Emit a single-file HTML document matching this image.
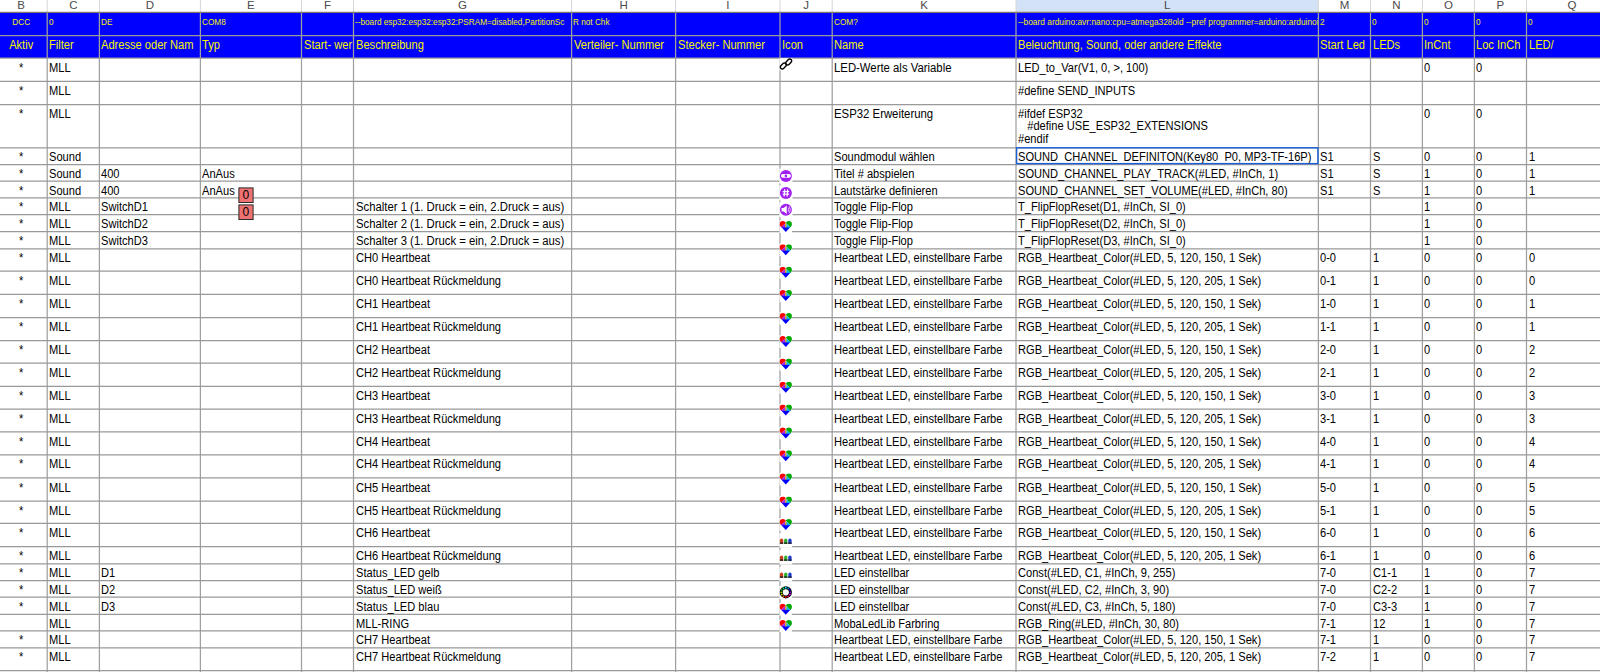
<!DOCTYPE html>
<html><head><meta charset="utf-8">
<style>
html,body{margin:0;padding:0}
body{width:1600px;height:672px;overflow:hidden;background:#fff;position:relative;font-family:"Liberation Sans",sans-serif}
.t{position:absolute;white-space:pre;overflow:hidden;line-height:14px;height:14px}
.h{position:absolute;top:-1.5px;height:13px;line-height:13px;text-align:center;font-size:11.5px;color:#4a4a4a}
svg{position:absolute;left:0;top:0}
</style></head><body>
<div style="position:absolute;left:1016px;top:0;width:302.4px;height:12px;background:#d3e2f7"></div>
<div style="position:absolute;left:0;top:12.6px;width:1600px;height:45.4px;background:#0000ff"></div>
<div class="h" style="left:-5.20px;width:52.40px">B</div><div class="h" style="left:47.20px;width:52.20px">C</div><div class="h" style="left:99.40px;width:101.00px">D</div><div class="h" style="left:200.40px;width:101.10px">E</div><div class="h" style="left:301.50px;width:52.00px">F</div><div class="h" style="left:353.50px;width:218.10px">G</div><div class="h" style="left:571.60px;width:104.00px">H</div><div class="h" style="left:675.60px;width:104.40px">I</div><div class="h" style="left:780.00px;width:52.20px">J</div><div class="h" style="left:832.20px;width:183.80px">K</div><div class="h" style="left:1016.00px;width:302.40px">L</div><div class="h" style="left:1318.40px;width:52.10px">M</div><div class="h" style="left:1370.50px;width:51.90px">N</div><div class="h" style="left:1422.40px;width:52.00px">O</div><div class="h" style="left:1474.40px;width:52.10px">P</div><div class="h" style="left:1526.50px;width:91.00px">Q</div>
<svg width="1600" height="672" viewBox="0 0 1600 672"><line x1="47.2" y1="0" x2="47.2" y2="12" stroke="#d6d6d6" stroke-width="1"/><line x1="99.4" y1="0" x2="99.4" y2="12" stroke="#d6d6d6" stroke-width="1"/><line x1="200.4" y1="0" x2="200.4" y2="12" stroke="#d6d6d6" stroke-width="1"/><line x1="301.5" y1="0" x2="301.5" y2="12" stroke="#d6d6d6" stroke-width="1"/><line x1="353.5" y1="0" x2="353.5" y2="12" stroke="#d6d6d6" stroke-width="1"/><line x1="571.6" y1="0" x2="571.6" y2="12" stroke="#d6d6d6" stroke-width="1"/><line x1="675.6" y1="0" x2="675.6" y2="12" stroke="#d6d6d6" stroke-width="1"/><line x1="780" y1="0" x2="780" y2="12" stroke="#d6d6d6" stroke-width="1"/><line x1="832.2" y1="0" x2="832.2" y2="12" stroke="#d6d6d6" stroke-width="1"/><line x1="1016" y1="0" x2="1016" y2="12" stroke="#d6d6d6" stroke-width="1"/><line x1="1318.4" y1="0" x2="1318.4" y2="12" stroke="#d6d6d6" stroke-width="1"/><line x1="1370.5" y1="0" x2="1370.5" y2="12" stroke="#d6d6d6" stroke-width="1"/><line x1="1422.4" y1="0" x2="1422.4" y2="12" stroke="#d6d6d6" stroke-width="1"/><line x1="1474.4" y1="0" x2="1474.4" y2="12" stroke="#d6d6d6" stroke-width="1"/><line x1="1526.5" y1="0" x2="1526.5" y2="12" stroke="#d6d6d6" stroke-width="1"/><line x1="47.2" y1="12.5" x2="47.2" y2="672" stroke="#a0a0a0" stroke-width="1.25"/><line x1="99.4" y1="12.5" x2="99.4" y2="672" stroke="#a0a0a0" stroke-width="1.25"/><line x1="200.4" y1="12.5" x2="200.4" y2="672" stroke="#a0a0a0" stroke-width="1.25"/><line x1="301.5" y1="12.5" x2="301.5" y2="672" stroke="#a0a0a0" stroke-width="1.25"/><line x1="353.5" y1="12.5" x2="353.5" y2="672" stroke="#a0a0a0" stroke-width="1.25"/><line x1="571.6" y1="12.5" x2="571.6" y2="672" stroke="#a0a0a0" stroke-width="1.25"/><line x1="675.6" y1="12.5" x2="675.6" y2="672" stroke="#a0a0a0" stroke-width="1.25"/><line x1="780" y1="12.5" x2="780" y2="672" stroke="#a0a0a0" stroke-width="1.25"/><line x1="832.2" y1="12.5" x2="832.2" y2="672" stroke="#a0a0a0" stroke-width="1.25"/><line x1="1016" y1="12.5" x2="1016" y2="672" stroke="#a0a0a0" stroke-width="1.25"/><line x1="1318.4" y1="12.5" x2="1318.4" y2="672" stroke="#a0a0a0" stroke-width="1.25"/><line x1="1370.5" y1="12.5" x2="1370.5" y2="672" stroke="#a0a0a0" stroke-width="1.25"/><line x1="1422.4" y1="12.5" x2="1422.4" y2="672" stroke="#a0a0a0" stroke-width="1.25"/><line x1="1474.4" y1="12.5" x2="1474.4" y2="672" stroke="#a0a0a0" stroke-width="1.25"/><line x1="1526.5" y1="12.5" x2="1526.5" y2="672" stroke="#a0a0a0" stroke-width="1.25"/><line x1="0" y1="35.5" x2="1600" y2="35.5" stroke="#999999" stroke-width="1.25"/><line x1="0" y1="58.2" x2="1600" y2="58.2" stroke="#999999" stroke-width="1.25"/><line x1="0" y1="81.3" x2="1600" y2="81.3" stroke="#999999" stroke-width="1.25"/><line x1="0" y1="104.5" x2="1600" y2="104.5" stroke="#999999" stroke-width="1.25"/><line x1="0" y1="147.75" x2="1600" y2="147.75" stroke="#999999" stroke-width="1.25"/><line x1="0" y1="164.6" x2="1600" y2="164.6" stroke="#999999" stroke-width="1.25"/><line x1="0" y1="181" x2="1600" y2="181" stroke="#999999" stroke-width="1.25"/><line x1="0" y1="197.75" x2="1600" y2="197.75" stroke="#999999" stroke-width="1.25"/><line x1="0" y1="214.5" x2="1600" y2="214.5" stroke="#999999" stroke-width="1.25"/><line x1="0" y1="231.5" x2="1600" y2="231.5" stroke="#999999" stroke-width="1.25"/><line x1="0" y1="248.75" x2="1600" y2="248.75" stroke="#999999" stroke-width="1.25"/><line x1="0" y1="271.2" x2="1600" y2="271.2" stroke="#999999" stroke-width="1.25"/><line x1="0" y1="294.4" x2="1600" y2="294.4" stroke="#999999" stroke-width="1.25"/><line x1="0" y1="317.5" x2="1600" y2="317.5" stroke="#999999" stroke-width="1.25"/><line x1="0" y1="340.5" x2="1600" y2="340.5" stroke="#999999" stroke-width="1.25"/><line x1="0" y1="363.1" x2="1600" y2="363.1" stroke="#999999" stroke-width="1.25"/><line x1="0" y1="386.25" x2="1600" y2="386.25" stroke="#999999" stroke-width="1.25"/><line x1="0" y1="409" x2="1600" y2="409" stroke="#999999" stroke-width="1.25"/><line x1="0" y1="431.9" x2="1600" y2="431.9" stroke="#999999" stroke-width="1.25"/><line x1="0" y1="454.75" x2="1600" y2="454.75" stroke="#999999" stroke-width="1.25"/><line x1="0" y1="477.9" x2="1600" y2="477.9" stroke="#999999" stroke-width="1.25"/><line x1="0" y1="501" x2="1600" y2="501" stroke="#999999" stroke-width="1.25"/><line x1="0" y1="523.4" x2="1600" y2="523.4" stroke="#999999" stroke-width="1.25"/><line x1="0" y1="546.5" x2="1600" y2="546.5" stroke="#999999" stroke-width="1.25"/><line x1="0" y1="563.75" x2="1600" y2="563.75" stroke="#999999" stroke-width="1.25"/><line x1="0" y1="580.6" x2="1600" y2="580.6" stroke="#999999" stroke-width="1.25"/><line x1="0" y1="597.1" x2="1600" y2="597.1" stroke="#999999" stroke-width="1.25"/><line x1="0" y1="614.25" x2="1600" y2="614.25" stroke="#999999" stroke-width="1.25"/><line x1="0" y1="630.9" x2="1600" y2="630.9" stroke="#999999" stroke-width="1.25"/><line x1="0" y1="647.75" x2="1600" y2="647.75" stroke="#999999" stroke-width="1.25"/><line x1="0" y1="670.5" x2="1600" y2="670.5" stroke="#999999" stroke-width="1.25"/><line x1="0" y1="12.4" x2="1600" y2="12.4" stroke="#7f7a69" stroke-width="1.2"/></svg>
<div class="t" style="left:-5.20px;top:60.84px;width:52.40px;text-align:center;font-size:12px;color:#000;transform:scaleX(0.925)">*</div><div class="t" style="left:49.20px;top:60.84px;width:53.73px;font-size:12px;color:#000;transform:scaleX(0.925);transform-origin:0 0">MLL</div><div class="t" style="left:834.20px;top:60.84px;width:191.78px;font-size:12px;color:#000;transform:scaleX(0.94535);transform-origin:0 0">LED-Werte als Variable</div><div class="t" style="left:1018.00px;top:60.84px;width:324.22px;font-size:12px;color:#000;transform:scaleX(0.925);transform-origin:0 0">LED_to_Var(V1, 0, &gt;, 100)</div><div class="t" style="left:1424.40px;top:60.84px;width:53.51px;font-size:12px;color:#000;transform:scaleX(0.925);transform-origin:0 0">0</div><div class="t" style="left:1476.40px;top:60.84px;width:53.62px;font-size:12px;color:#000;transform:scaleX(0.925);transform-origin:0 0">0</div><div class="t" style="left:-5.20px;top:83.84px;width:52.40px;text-align:center;font-size:12px;color:#000;transform:scaleX(0.925)">*</div><div class="t" style="left:49.20px;top:83.84px;width:53.73px;font-size:12px;color:#000;transform:scaleX(0.925);transform-origin:0 0">MLL</div><div class="t" style="left:1018.00px;top:83.84px;width:324.22px;font-size:12px;color:#000;transform:scaleX(0.925);transform-origin:0 0">#define SEND_INPUTS</div><div class="t" style="left:-5.20px;top:106.84px;width:52.40px;text-align:center;font-size:12px;color:#000;transform:scaleX(0.925)">*</div><div class="t" style="left:49.20px;top:106.84px;width:53.73px;font-size:12px;color:#000;transform:scaleX(0.925);transform-origin:0 0">MLL</div><div class="t" style="left:834.20px;top:106.84px;width:191.41px;font-size:12px;color:#000;transform:scaleX(0.9472);transform-origin:0 0">ESP32 Erweiterung</div><div class="t" style="left:1424.40px;top:106.84px;width:53.51px;font-size:12px;color:#000;transform:scaleX(0.925);transform-origin:0 0">0</div><div class="t" style="left:1476.40px;top:106.84px;width:53.62px;font-size:12px;color:#000;transform:scaleX(0.925);transform-origin:0 0">0</div><div class="t" style="left:-5.20px;top:149.84px;width:52.40px;text-align:center;font-size:12px;color:#000;transform:scaleX(0.925)">*</div><div class="t" style="left:49.20px;top:149.84px;width:53.73px;font-size:12px;color:#000;transform:scaleX(0.925);transform-origin:0 0">Sound</div><div class="t" style="left:834.20px;top:149.84px;width:196.00px;font-size:12px;color:#000;transform:scaleX(0.925);transform-origin:0 0">Soundmodul wählen</div><div class="t" style="left:1018.00px;top:149.84px;width:324.22px;font-size:12px;color:#000;transform:scaleX(0.925);transform-origin:0 0">SOUND_CHANNEL_DEFINITON(Key80_P0, MP3-TF-16P)</div><div class="t" style="left:1320.40px;top:149.84px;width:53.62px;font-size:12px;color:#000;transform:scaleX(0.925);transform-origin:0 0">S1</div><div class="t" style="left:1372.50px;top:149.84px;width:53.41px;font-size:12px;color:#000;transform:scaleX(0.925);transform-origin:0 0">S</div><div class="t" style="left:1424.40px;top:149.84px;width:53.51px;font-size:12px;color:#000;transform:scaleX(0.925);transform-origin:0 0">0</div><div class="t" style="left:1476.40px;top:149.84px;width:53.62px;font-size:12px;color:#000;transform:scaleX(0.925);transform-origin:0 0">0</div><div class="t" style="left:1528.50px;top:149.84px;width:95.68px;font-size:12px;color:#000;transform:scaleX(0.925);transform-origin:0 0">1</div><div class="t" style="left:-5.20px;top:166.84px;width:52.40px;text-align:center;font-size:12px;color:#000;transform:scaleX(0.925)">*</div><div class="t" style="left:49.20px;top:166.84px;width:53.73px;font-size:12px;color:#000;transform:scaleX(0.925);transform-origin:0 0">Sound</div><div class="t" style="left:101.40px;top:166.84px;width:106.49px;font-size:12px;color:#000;transform:scaleX(0.925);transform-origin:0 0">400</div><div class="t" style="left:202.40px;top:166.84px;width:106.59px;font-size:12px;color:#000;transform:scaleX(0.925);transform-origin:0 0">AnAus</div><div class="t" style="left:834.20px;top:166.84px;width:196.00px;font-size:12px;color:#000;transform:scaleX(0.925);transform-origin:0 0">Titel # abspielen</div><div class="t" style="left:1018.00px;top:166.84px;width:324.22px;font-size:12px;color:#000;transform:scaleX(0.925);transform-origin:0 0">SOUND_CHANNEL_PLAY_TRACK(#LED, #InCh, 1)</div><div class="t" style="left:1320.40px;top:166.84px;width:53.62px;font-size:12px;color:#000;transform:scaleX(0.925);transform-origin:0 0">S1</div><div class="t" style="left:1372.50px;top:166.84px;width:53.41px;font-size:12px;color:#000;transform:scaleX(0.925);transform-origin:0 0">S</div><div class="t" style="left:1424.40px;top:166.84px;width:53.51px;font-size:12px;color:#000;transform:scaleX(0.925);transform-origin:0 0">1</div><div class="t" style="left:1476.40px;top:166.84px;width:53.62px;font-size:12px;color:#000;transform:scaleX(0.925);transform-origin:0 0">0</div><div class="t" style="left:1528.50px;top:166.84px;width:95.68px;font-size:12px;color:#000;transform:scaleX(0.925);transform-origin:0 0">1</div><div class="t" style="left:-5.20px;top:183.84px;width:52.40px;text-align:center;font-size:12px;color:#000;transform:scaleX(0.925)">*</div><div class="t" style="left:49.20px;top:183.84px;width:53.73px;font-size:12px;color:#000;transform:scaleX(0.925);transform-origin:0 0">Sound</div><div class="t" style="left:101.40px;top:183.84px;width:106.49px;font-size:12px;color:#000;transform:scaleX(0.925);transform-origin:0 0">400</div><div class="t" style="left:202.40px;top:183.84px;width:106.59px;font-size:12px;color:#000;transform:scaleX(0.925);transform-origin:0 0">AnAus</div><div class="t" style="left:834.20px;top:183.84px;width:196.00px;font-size:12px;color:#000;transform:scaleX(0.925);transform-origin:0 0">Lautstärke definieren</div><div class="t" style="left:1018.00px;top:183.84px;width:324.22px;font-size:12px;color:#000;transform:scaleX(0.925);transform-origin:0 0">SOUND_CHANNEL_SET_VOLUME(#LED, #InCh, 80)</div><div class="t" style="left:1320.40px;top:183.84px;width:53.62px;font-size:12px;color:#000;transform:scaleX(0.925);transform-origin:0 0">S1</div><div class="t" style="left:1372.50px;top:183.84px;width:53.41px;font-size:12px;color:#000;transform:scaleX(0.925);transform-origin:0 0">S</div><div class="t" style="left:1424.40px;top:183.84px;width:53.51px;font-size:12px;color:#000;transform:scaleX(0.925);transform-origin:0 0">1</div><div class="t" style="left:1476.40px;top:183.84px;width:53.62px;font-size:12px;color:#000;transform:scaleX(0.925);transform-origin:0 0">0</div><div class="t" style="left:1528.50px;top:183.84px;width:95.68px;font-size:12px;color:#000;transform:scaleX(0.925);transform-origin:0 0">1</div><div class="t" style="left:-5.20px;top:199.84px;width:52.40px;text-align:center;font-size:12px;color:#000;transform:scaleX(0.925)">*</div><div class="t" style="left:49.20px;top:199.84px;width:53.73px;font-size:12px;color:#000;transform:scaleX(0.925);transform-origin:0 0">MLL</div><div class="t" style="left:101.40px;top:199.84px;width:106.49px;font-size:12px;color:#000;transform:scaleX(0.925);transform-origin:0 0">SwitchD1</div><div class="t" style="left:355.50px;top:199.84px;width:228.51px;font-size:12px;color:#000;transform:scaleX(0.9435000000000001);transform-origin:0 0">Schalter 1 (1. Druck = ein, 2.Druck = aus)</div><div class="t" style="left:834.20px;top:199.84px;width:196.00px;font-size:12px;color:#000;transform:scaleX(0.925);transform-origin:0 0">Toggle Flip-Flop</div><div class="t" style="left:1018.00px;top:199.84px;width:324.22px;font-size:12px;color:#000;transform:scaleX(0.925);transform-origin:0 0">T_FlipFlopReset(D1, #InCh, SI_0)</div><div class="t" style="left:1424.40px;top:199.84px;width:53.51px;font-size:12px;color:#000;transform:scaleX(0.925);transform-origin:0 0">1</div><div class="t" style="left:1476.40px;top:199.84px;width:53.62px;font-size:12px;color:#000;transform:scaleX(0.925);transform-origin:0 0">0</div><div class="t" style="left:-5.20px;top:216.84px;width:52.40px;text-align:center;font-size:12px;color:#000;transform:scaleX(0.925)">*</div><div class="t" style="left:49.20px;top:216.84px;width:53.73px;font-size:12px;color:#000;transform:scaleX(0.925);transform-origin:0 0">MLL</div><div class="t" style="left:101.40px;top:216.84px;width:106.49px;font-size:12px;color:#000;transform:scaleX(0.925);transform-origin:0 0">SwitchD2</div><div class="t" style="left:355.50px;top:216.84px;width:228.51px;font-size:12px;color:#000;transform:scaleX(0.9435000000000001);transform-origin:0 0">Schalter 2 (1. Druck = ein, 2.Druck = aus)</div><div class="t" style="left:834.20px;top:216.84px;width:196.00px;font-size:12px;color:#000;transform:scaleX(0.925);transform-origin:0 0">Toggle Flip-Flop</div><div class="t" style="left:1018.00px;top:216.84px;width:324.22px;font-size:12px;color:#000;transform:scaleX(0.925);transform-origin:0 0">T_FlipFlopReset(D2, #InCh, SI_0)</div><div class="t" style="left:1424.40px;top:216.84px;width:53.51px;font-size:12px;color:#000;transform:scaleX(0.925);transform-origin:0 0">1</div><div class="t" style="left:1476.40px;top:216.84px;width:53.62px;font-size:12px;color:#000;transform:scaleX(0.925);transform-origin:0 0">0</div><div class="t" style="left:-5.20px;top:233.84px;width:52.40px;text-align:center;font-size:12px;color:#000;transform:scaleX(0.925)">*</div><div class="t" style="left:49.20px;top:233.84px;width:53.73px;font-size:12px;color:#000;transform:scaleX(0.925);transform-origin:0 0">MLL</div><div class="t" style="left:101.40px;top:233.84px;width:106.49px;font-size:12px;color:#000;transform:scaleX(0.925);transform-origin:0 0">SwitchD3</div><div class="t" style="left:355.50px;top:233.84px;width:228.51px;font-size:12px;color:#000;transform:scaleX(0.9435000000000001);transform-origin:0 0">Schalter 3 (1. Druck = ein, 2.Druck = aus)</div><div class="t" style="left:834.20px;top:233.84px;width:196.00px;font-size:12px;color:#000;transform:scaleX(0.925);transform-origin:0 0">Toggle Flip-Flop</div><div class="t" style="left:1018.00px;top:233.84px;width:324.22px;font-size:12px;color:#000;transform:scaleX(0.925);transform-origin:0 0">T_FlipFlopReset(D3, #InCh, SI_0)</div><div class="t" style="left:1424.40px;top:233.84px;width:53.51px;font-size:12px;color:#000;transform:scaleX(0.925);transform-origin:0 0">1</div><div class="t" style="left:1476.40px;top:233.84px;width:53.62px;font-size:12px;color:#000;transform:scaleX(0.925);transform-origin:0 0">0</div><div class="t" style="left:-5.20px;top:250.84px;width:52.40px;text-align:center;font-size:12px;color:#000;transform:scaleX(0.925)">*</div><div class="t" style="left:49.20px;top:250.84px;width:53.73px;font-size:12px;color:#000;transform:scaleX(0.925);transform-origin:0 0">MLL</div><div class="t" style="left:355.50px;top:250.84px;width:233.08px;font-size:12px;color:#000;transform:scaleX(0.925);transform-origin:0 0">CH0 Heartbeat</div><div class="t" style="left:834.20px;top:250.84px;width:196.00px;font-size:12px;color:#000;transform:scaleX(0.925);transform-origin:0 0">Heartbeat LED, einstellbare Farbe</div><div class="t" style="left:1018.00px;top:250.84px;width:324.22px;font-size:12px;color:#000;transform:scaleX(0.925);transform-origin:0 0">RGB_Heartbeat_Color(#LED, 5, 120, 150, 1 Sek)</div><div class="t" style="left:1320.40px;top:250.84px;width:53.62px;font-size:12px;color:#000;transform:scaleX(0.925);transform-origin:0 0">0-0</div><div class="t" style="left:1372.50px;top:250.84px;width:53.41px;font-size:12px;color:#000;transform:scaleX(0.925);transform-origin:0 0">1</div><div class="t" style="left:1424.40px;top:250.84px;width:53.51px;font-size:12px;color:#000;transform:scaleX(0.925);transform-origin:0 0">0</div><div class="t" style="left:1476.40px;top:250.84px;width:53.62px;font-size:12px;color:#000;transform:scaleX(0.925);transform-origin:0 0">0</div><div class="t" style="left:1528.50px;top:250.84px;width:95.68px;font-size:12px;color:#000;transform:scaleX(0.925);transform-origin:0 0">0</div><div class="t" style="left:-5.20px;top:273.84px;width:52.40px;text-align:center;font-size:12px;color:#000;transform:scaleX(0.925)">*</div><div class="t" style="left:49.20px;top:273.84px;width:53.73px;font-size:12px;color:#000;transform:scaleX(0.925);transform-origin:0 0">MLL</div><div class="t" style="left:355.50px;top:273.84px;width:233.08px;font-size:12px;color:#000;transform:scaleX(0.925);transform-origin:0 0">CH0 Heartbeat Rückmeldung</div><div class="t" style="left:834.20px;top:273.84px;width:196.00px;font-size:12px;color:#000;transform:scaleX(0.925);transform-origin:0 0">Heartbeat LED, einstellbare Farbe</div><div class="t" style="left:1018.00px;top:273.84px;width:324.22px;font-size:12px;color:#000;transform:scaleX(0.925);transform-origin:0 0">RGB_Heartbeat_Color(#LED, 5, 120, 205, 1 Sek)</div><div class="t" style="left:1320.40px;top:273.84px;width:53.62px;font-size:12px;color:#000;transform:scaleX(0.925);transform-origin:0 0">0-1</div><div class="t" style="left:1372.50px;top:273.84px;width:53.41px;font-size:12px;color:#000;transform:scaleX(0.925);transform-origin:0 0">1</div><div class="t" style="left:1424.40px;top:273.84px;width:53.51px;font-size:12px;color:#000;transform:scaleX(0.925);transform-origin:0 0">0</div><div class="t" style="left:1476.40px;top:273.84px;width:53.62px;font-size:12px;color:#000;transform:scaleX(0.925);transform-origin:0 0">0</div><div class="t" style="left:1528.50px;top:273.84px;width:95.68px;font-size:12px;color:#000;transform:scaleX(0.925);transform-origin:0 0">0</div><div class="t" style="left:-5.20px;top:296.84px;width:52.40px;text-align:center;font-size:12px;color:#000;transform:scaleX(0.925)">*</div><div class="t" style="left:49.20px;top:296.84px;width:53.73px;font-size:12px;color:#000;transform:scaleX(0.925);transform-origin:0 0">MLL</div><div class="t" style="left:355.50px;top:296.84px;width:233.08px;font-size:12px;color:#000;transform:scaleX(0.925);transform-origin:0 0">CH1 Heartbeat</div><div class="t" style="left:834.20px;top:296.84px;width:196.00px;font-size:12px;color:#000;transform:scaleX(0.925);transform-origin:0 0">Heartbeat LED, einstellbare Farbe</div><div class="t" style="left:1018.00px;top:296.84px;width:324.22px;font-size:12px;color:#000;transform:scaleX(0.925);transform-origin:0 0">RGB_Heartbeat_Color(#LED, 5, 120, 150, 1 Sek)</div><div class="t" style="left:1320.40px;top:296.84px;width:53.62px;font-size:12px;color:#000;transform:scaleX(0.925);transform-origin:0 0">1-0</div><div class="t" style="left:1372.50px;top:296.84px;width:53.41px;font-size:12px;color:#000;transform:scaleX(0.925);transform-origin:0 0">1</div><div class="t" style="left:1424.40px;top:296.84px;width:53.51px;font-size:12px;color:#000;transform:scaleX(0.925);transform-origin:0 0">0</div><div class="t" style="left:1476.40px;top:296.84px;width:53.62px;font-size:12px;color:#000;transform:scaleX(0.925);transform-origin:0 0">0</div><div class="t" style="left:1528.50px;top:296.84px;width:95.68px;font-size:12px;color:#000;transform:scaleX(0.925);transform-origin:0 0">1</div><div class="t" style="left:-5.20px;top:319.84px;width:52.40px;text-align:center;font-size:12px;color:#000;transform:scaleX(0.925)">*</div><div class="t" style="left:49.20px;top:319.84px;width:53.73px;font-size:12px;color:#000;transform:scaleX(0.925);transform-origin:0 0">MLL</div><div class="t" style="left:355.50px;top:319.84px;width:233.08px;font-size:12px;color:#000;transform:scaleX(0.925);transform-origin:0 0">CH1 Heartbeat Rückmeldung</div><div class="t" style="left:834.20px;top:319.84px;width:196.00px;font-size:12px;color:#000;transform:scaleX(0.925);transform-origin:0 0">Heartbeat LED, einstellbare Farbe</div><div class="t" style="left:1018.00px;top:319.84px;width:324.22px;font-size:12px;color:#000;transform:scaleX(0.925);transform-origin:0 0">RGB_Heartbeat_Color(#LED, 5, 120, 205, 1 Sek)</div><div class="t" style="left:1320.40px;top:319.84px;width:53.62px;font-size:12px;color:#000;transform:scaleX(0.925);transform-origin:0 0">1-1</div><div class="t" style="left:1372.50px;top:319.84px;width:53.41px;font-size:12px;color:#000;transform:scaleX(0.925);transform-origin:0 0">1</div><div class="t" style="left:1424.40px;top:319.84px;width:53.51px;font-size:12px;color:#000;transform:scaleX(0.925);transform-origin:0 0">0</div><div class="t" style="left:1476.40px;top:319.84px;width:53.62px;font-size:12px;color:#000;transform:scaleX(0.925);transform-origin:0 0">0</div><div class="t" style="left:1528.50px;top:319.84px;width:95.68px;font-size:12px;color:#000;transform:scaleX(0.925);transform-origin:0 0">1</div><div class="t" style="left:-5.20px;top:342.84px;width:52.40px;text-align:center;font-size:12px;color:#000;transform:scaleX(0.925)">*</div><div class="t" style="left:49.20px;top:342.84px;width:53.73px;font-size:12px;color:#000;transform:scaleX(0.925);transform-origin:0 0">MLL</div><div class="t" style="left:355.50px;top:342.84px;width:233.08px;font-size:12px;color:#000;transform:scaleX(0.925);transform-origin:0 0">CH2 Heartbeat</div><div class="t" style="left:834.20px;top:342.84px;width:196.00px;font-size:12px;color:#000;transform:scaleX(0.925);transform-origin:0 0">Heartbeat LED, einstellbare Farbe</div><div class="t" style="left:1018.00px;top:342.84px;width:324.22px;font-size:12px;color:#000;transform:scaleX(0.925);transform-origin:0 0">RGB_Heartbeat_Color(#LED, 5, 120, 150, 1 Sek)</div><div class="t" style="left:1320.40px;top:342.84px;width:53.62px;font-size:12px;color:#000;transform:scaleX(0.925);transform-origin:0 0">2-0</div><div class="t" style="left:1372.50px;top:342.84px;width:53.41px;font-size:12px;color:#000;transform:scaleX(0.925);transform-origin:0 0">1</div><div class="t" style="left:1424.40px;top:342.84px;width:53.51px;font-size:12px;color:#000;transform:scaleX(0.925);transform-origin:0 0">0</div><div class="t" style="left:1476.40px;top:342.84px;width:53.62px;font-size:12px;color:#000;transform:scaleX(0.925);transform-origin:0 0">0</div><div class="t" style="left:1528.50px;top:342.84px;width:95.68px;font-size:12px;color:#000;transform:scaleX(0.925);transform-origin:0 0">2</div><div class="t" style="left:-5.20px;top:365.84px;width:52.40px;text-align:center;font-size:12px;color:#000;transform:scaleX(0.925)">*</div><div class="t" style="left:49.20px;top:365.84px;width:53.73px;font-size:12px;color:#000;transform:scaleX(0.925);transform-origin:0 0">MLL</div><div class="t" style="left:355.50px;top:365.84px;width:233.08px;font-size:12px;color:#000;transform:scaleX(0.925);transform-origin:0 0">CH2 Heartbeat Rückmeldung</div><div class="t" style="left:834.20px;top:365.84px;width:196.00px;font-size:12px;color:#000;transform:scaleX(0.925);transform-origin:0 0">Heartbeat LED, einstellbare Farbe</div><div class="t" style="left:1018.00px;top:365.84px;width:324.22px;font-size:12px;color:#000;transform:scaleX(0.925);transform-origin:0 0">RGB_Heartbeat_Color(#LED, 5, 120, 205, 1 Sek)</div><div class="t" style="left:1320.40px;top:365.84px;width:53.62px;font-size:12px;color:#000;transform:scaleX(0.925);transform-origin:0 0">2-1</div><div class="t" style="left:1372.50px;top:365.84px;width:53.41px;font-size:12px;color:#000;transform:scaleX(0.925);transform-origin:0 0">1</div><div class="t" style="left:1424.40px;top:365.84px;width:53.51px;font-size:12px;color:#000;transform:scaleX(0.925);transform-origin:0 0">0</div><div class="t" style="left:1476.40px;top:365.84px;width:53.62px;font-size:12px;color:#000;transform:scaleX(0.925);transform-origin:0 0">0</div><div class="t" style="left:1528.50px;top:365.84px;width:95.68px;font-size:12px;color:#000;transform:scaleX(0.925);transform-origin:0 0">2</div><div class="t" style="left:-5.20px;top:388.84px;width:52.40px;text-align:center;font-size:12px;color:#000;transform:scaleX(0.925)">*</div><div class="t" style="left:49.20px;top:388.84px;width:53.73px;font-size:12px;color:#000;transform:scaleX(0.925);transform-origin:0 0">MLL</div><div class="t" style="left:355.50px;top:388.84px;width:233.08px;font-size:12px;color:#000;transform:scaleX(0.925);transform-origin:0 0">CH3 Heartbeat</div><div class="t" style="left:834.20px;top:388.84px;width:196.00px;font-size:12px;color:#000;transform:scaleX(0.925);transform-origin:0 0">Heartbeat LED, einstellbare Farbe</div><div class="t" style="left:1018.00px;top:388.84px;width:324.22px;font-size:12px;color:#000;transform:scaleX(0.925);transform-origin:0 0">RGB_Heartbeat_Color(#LED, 5, 120, 150, 1 Sek)</div><div class="t" style="left:1320.40px;top:388.84px;width:53.62px;font-size:12px;color:#000;transform:scaleX(0.925);transform-origin:0 0">3-0</div><div class="t" style="left:1372.50px;top:388.84px;width:53.41px;font-size:12px;color:#000;transform:scaleX(0.925);transform-origin:0 0">1</div><div class="t" style="left:1424.40px;top:388.84px;width:53.51px;font-size:12px;color:#000;transform:scaleX(0.925);transform-origin:0 0">0</div><div class="t" style="left:1476.40px;top:388.84px;width:53.62px;font-size:12px;color:#000;transform:scaleX(0.925);transform-origin:0 0">0</div><div class="t" style="left:1528.50px;top:388.84px;width:95.68px;font-size:12px;color:#000;transform:scaleX(0.925);transform-origin:0 0">3</div><div class="t" style="left:-5.20px;top:411.84px;width:52.40px;text-align:center;font-size:12px;color:#000;transform:scaleX(0.925)">*</div><div class="t" style="left:49.20px;top:411.84px;width:53.73px;font-size:12px;color:#000;transform:scaleX(0.925);transform-origin:0 0">MLL</div><div class="t" style="left:355.50px;top:411.84px;width:233.08px;font-size:12px;color:#000;transform:scaleX(0.925);transform-origin:0 0">CH3 Heartbeat Rückmeldung</div><div class="t" style="left:834.20px;top:411.84px;width:196.00px;font-size:12px;color:#000;transform:scaleX(0.925);transform-origin:0 0">Heartbeat LED, einstellbare Farbe</div><div class="t" style="left:1018.00px;top:411.84px;width:324.22px;font-size:12px;color:#000;transform:scaleX(0.925);transform-origin:0 0">RGB_Heartbeat_Color(#LED, 5, 120, 205, 1 Sek)</div><div class="t" style="left:1320.40px;top:411.84px;width:53.62px;font-size:12px;color:#000;transform:scaleX(0.925);transform-origin:0 0">3-1</div><div class="t" style="left:1372.50px;top:411.84px;width:53.41px;font-size:12px;color:#000;transform:scaleX(0.925);transform-origin:0 0">1</div><div class="t" style="left:1424.40px;top:411.84px;width:53.51px;font-size:12px;color:#000;transform:scaleX(0.925);transform-origin:0 0">0</div><div class="t" style="left:1476.40px;top:411.84px;width:53.62px;font-size:12px;color:#000;transform:scaleX(0.925);transform-origin:0 0">0</div><div class="t" style="left:1528.50px;top:411.84px;width:95.68px;font-size:12px;color:#000;transform:scaleX(0.925);transform-origin:0 0">3</div><div class="t" style="left:-5.20px;top:434.84px;width:52.40px;text-align:center;font-size:12px;color:#000;transform:scaleX(0.925)">*</div><div class="t" style="left:49.20px;top:434.84px;width:53.73px;font-size:12px;color:#000;transform:scaleX(0.925);transform-origin:0 0">MLL</div><div class="t" style="left:355.50px;top:434.84px;width:233.08px;font-size:12px;color:#000;transform:scaleX(0.925);transform-origin:0 0">CH4 Heartbeat</div><div class="t" style="left:834.20px;top:434.84px;width:196.00px;font-size:12px;color:#000;transform:scaleX(0.925);transform-origin:0 0">Heartbeat LED, einstellbare Farbe</div><div class="t" style="left:1018.00px;top:434.84px;width:324.22px;font-size:12px;color:#000;transform:scaleX(0.925);transform-origin:0 0">RGB_Heartbeat_Color(#LED, 5, 120, 150, 1 Sek)</div><div class="t" style="left:1320.40px;top:434.84px;width:53.62px;font-size:12px;color:#000;transform:scaleX(0.925);transform-origin:0 0">4-0</div><div class="t" style="left:1372.50px;top:434.84px;width:53.41px;font-size:12px;color:#000;transform:scaleX(0.925);transform-origin:0 0">1</div><div class="t" style="left:1424.40px;top:434.84px;width:53.51px;font-size:12px;color:#000;transform:scaleX(0.925);transform-origin:0 0">0</div><div class="t" style="left:1476.40px;top:434.84px;width:53.62px;font-size:12px;color:#000;transform:scaleX(0.925);transform-origin:0 0">0</div><div class="t" style="left:1528.50px;top:434.84px;width:95.68px;font-size:12px;color:#000;transform:scaleX(0.925);transform-origin:0 0">4</div><div class="t" style="left:-5.20px;top:456.84px;width:52.40px;text-align:center;font-size:12px;color:#000;transform:scaleX(0.925)">*</div><div class="t" style="left:49.20px;top:456.84px;width:53.73px;font-size:12px;color:#000;transform:scaleX(0.925);transform-origin:0 0">MLL</div><div class="t" style="left:355.50px;top:456.84px;width:233.08px;font-size:12px;color:#000;transform:scaleX(0.925);transform-origin:0 0">CH4 Heartbeat Rückmeldung</div><div class="t" style="left:834.20px;top:456.84px;width:196.00px;font-size:12px;color:#000;transform:scaleX(0.925);transform-origin:0 0">Heartbeat LED, einstellbare Farbe</div><div class="t" style="left:1018.00px;top:456.84px;width:324.22px;font-size:12px;color:#000;transform:scaleX(0.925);transform-origin:0 0">RGB_Heartbeat_Color(#LED, 5, 120, 205, 1 Sek)</div><div class="t" style="left:1320.40px;top:456.84px;width:53.62px;font-size:12px;color:#000;transform:scaleX(0.925);transform-origin:0 0">4-1</div><div class="t" style="left:1372.50px;top:456.84px;width:53.41px;font-size:12px;color:#000;transform:scaleX(0.925);transform-origin:0 0">1</div><div class="t" style="left:1424.40px;top:456.84px;width:53.51px;font-size:12px;color:#000;transform:scaleX(0.925);transform-origin:0 0">0</div><div class="t" style="left:1476.40px;top:456.84px;width:53.62px;font-size:12px;color:#000;transform:scaleX(0.925);transform-origin:0 0">0</div><div class="t" style="left:1528.50px;top:456.84px;width:95.68px;font-size:12px;color:#000;transform:scaleX(0.925);transform-origin:0 0">4</div><div class="t" style="left:-5.20px;top:480.84px;width:52.40px;text-align:center;font-size:12px;color:#000;transform:scaleX(0.925)">*</div><div class="t" style="left:49.20px;top:480.84px;width:53.73px;font-size:12px;color:#000;transform:scaleX(0.925);transform-origin:0 0">MLL</div><div class="t" style="left:355.50px;top:480.84px;width:233.08px;font-size:12px;color:#000;transform:scaleX(0.925);transform-origin:0 0">CH5 Heartbeat</div><div class="t" style="left:834.20px;top:480.84px;width:196.00px;font-size:12px;color:#000;transform:scaleX(0.925);transform-origin:0 0">Heartbeat LED, einstellbare Farbe</div><div class="t" style="left:1018.00px;top:480.84px;width:324.22px;font-size:12px;color:#000;transform:scaleX(0.925);transform-origin:0 0">RGB_Heartbeat_Color(#LED, 5, 120, 150, 1 Sek)</div><div class="t" style="left:1320.40px;top:480.84px;width:53.62px;font-size:12px;color:#000;transform:scaleX(0.925);transform-origin:0 0">5-0</div><div class="t" style="left:1372.50px;top:480.84px;width:53.41px;font-size:12px;color:#000;transform:scaleX(0.925);transform-origin:0 0">1</div><div class="t" style="left:1424.40px;top:480.84px;width:53.51px;font-size:12px;color:#000;transform:scaleX(0.925);transform-origin:0 0">0</div><div class="t" style="left:1476.40px;top:480.84px;width:53.62px;font-size:12px;color:#000;transform:scaleX(0.925);transform-origin:0 0">0</div><div class="t" style="left:1528.50px;top:480.84px;width:95.68px;font-size:12px;color:#000;transform:scaleX(0.925);transform-origin:0 0">5</div><div class="t" style="left:-5.20px;top:503.84px;width:52.40px;text-align:center;font-size:12px;color:#000;transform:scaleX(0.925)">*</div><div class="t" style="left:49.20px;top:503.84px;width:53.73px;font-size:12px;color:#000;transform:scaleX(0.925);transform-origin:0 0">MLL</div><div class="t" style="left:355.50px;top:503.84px;width:233.08px;font-size:12px;color:#000;transform:scaleX(0.925);transform-origin:0 0">CH5 Heartbeat Rückmeldung</div><div class="t" style="left:834.20px;top:503.84px;width:196.00px;font-size:12px;color:#000;transform:scaleX(0.925);transform-origin:0 0">Heartbeat LED, einstellbare Farbe</div><div class="t" style="left:1018.00px;top:503.84px;width:324.22px;font-size:12px;color:#000;transform:scaleX(0.925);transform-origin:0 0">RGB_Heartbeat_Color(#LED, 5, 120, 205, 1 Sek)</div><div class="t" style="left:1320.40px;top:503.84px;width:53.62px;font-size:12px;color:#000;transform:scaleX(0.925);transform-origin:0 0">5-1</div><div class="t" style="left:1372.50px;top:503.84px;width:53.41px;font-size:12px;color:#000;transform:scaleX(0.925);transform-origin:0 0">1</div><div class="t" style="left:1424.40px;top:503.84px;width:53.51px;font-size:12px;color:#000;transform:scaleX(0.925);transform-origin:0 0">0</div><div class="t" style="left:1476.40px;top:503.84px;width:53.62px;font-size:12px;color:#000;transform:scaleX(0.925);transform-origin:0 0">0</div><div class="t" style="left:1528.50px;top:503.84px;width:95.68px;font-size:12px;color:#000;transform:scaleX(0.925);transform-origin:0 0">5</div><div class="t" style="left:-5.20px;top:525.84px;width:52.40px;text-align:center;font-size:12px;color:#000;transform:scaleX(0.925)">*</div><div class="t" style="left:49.20px;top:525.84px;width:53.73px;font-size:12px;color:#000;transform:scaleX(0.925);transform-origin:0 0">MLL</div><div class="t" style="left:355.50px;top:525.84px;width:233.08px;font-size:12px;color:#000;transform:scaleX(0.925);transform-origin:0 0">CH6 Heartbeat</div><div class="t" style="left:834.20px;top:525.84px;width:196.00px;font-size:12px;color:#000;transform:scaleX(0.925);transform-origin:0 0">Heartbeat LED, einstellbare Farbe</div><div class="t" style="left:1018.00px;top:525.84px;width:324.22px;font-size:12px;color:#000;transform:scaleX(0.925);transform-origin:0 0">RGB_Heartbeat_Color(#LED, 5, 120, 150, 1 Sek)</div><div class="t" style="left:1320.40px;top:525.84px;width:53.62px;font-size:12px;color:#000;transform:scaleX(0.925);transform-origin:0 0">6-0</div><div class="t" style="left:1372.50px;top:525.84px;width:53.41px;font-size:12px;color:#000;transform:scaleX(0.925);transform-origin:0 0">1</div><div class="t" style="left:1424.40px;top:525.84px;width:53.51px;font-size:12px;color:#000;transform:scaleX(0.925);transform-origin:0 0">0</div><div class="t" style="left:1476.40px;top:525.84px;width:53.62px;font-size:12px;color:#000;transform:scaleX(0.925);transform-origin:0 0">0</div><div class="t" style="left:1528.50px;top:525.84px;width:95.68px;font-size:12px;color:#000;transform:scaleX(0.925);transform-origin:0 0">6</div><div class="t" style="left:-5.20px;top:548.84px;width:52.40px;text-align:center;font-size:12px;color:#000;transform:scaleX(0.925)">*</div><div class="t" style="left:49.20px;top:548.84px;width:53.73px;font-size:12px;color:#000;transform:scaleX(0.925);transform-origin:0 0">MLL</div><div class="t" style="left:355.50px;top:548.84px;width:233.08px;font-size:12px;color:#000;transform:scaleX(0.925);transform-origin:0 0">CH6 Heartbeat Rückmeldung</div><div class="t" style="left:834.20px;top:548.84px;width:196.00px;font-size:12px;color:#000;transform:scaleX(0.925);transform-origin:0 0">Heartbeat LED, einstellbare Farbe</div><div class="t" style="left:1018.00px;top:548.84px;width:324.22px;font-size:12px;color:#000;transform:scaleX(0.925);transform-origin:0 0">RGB_Heartbeat_Color(#LED, 5, 120, 205, 1 Sek)</div><div class="t" style="left:1320.40px;top:548.84px;width:53.62px;font-size:12px;color:#000;transform:scaleX(0.925);transform-origin:0 0">6-1</div><div class="t" style="left:1372.50px;top:548.84px;width:53.41px;font-size:12px;color:#000;transform:scaleX(0.925);transform-origin:0 0">1</div><div class="t" style="left:1424.40px;top:548.84px;width:53.51px;font-size:12px;color:#000;transform:scaleX(0.925);transform-origin:0 0">0</div><div class="t" style="left:1476.40px;top:548.84px;width:53.62px;font-size:12px;color:#000;transform:scaleX(0.925);transform-origin:0 0">0</div><div class="t" style="left:1528.50px;top:548.84px;width:95.68px;font-size:12px;color:#000;transform:scaleX(0.925);transform-origin:0 0">6</div><div class="t" style="left:-5.20px;top:565.84px;width:52.40px;text-align:center;font-size:12px;color:#000;transform:scaleX(0.925)">*</div><div class="t" style="left:49.20px;top:565.84px;width:53.73px;font-size:12px;color:#000;transform:scaleX(0.925);transform-origin:0 0">MLL</div><div class="t" style="left:101.40px;top:565.84px;width:106.49px;font-size:12px;color:#000;transform:scaleX(0.925);transform-origin:0 0">D1</div><div class="t" style="left:355.50px;top:565.84px;width:233.08px;font-size:12px;color:#000;transform:scaleX(0.925);transform-origin:0 0">Status_LED gelb</div><div class="t" style="left:834.20px;top:565.84px;width:196.00px;font-size:12px;color:#000;transform:scaleX(0.925);transform-origin:0 0">LED einstellbar</div><div class="t" style="left:1018.00px;top:565.84px;width:324.22px;font-size:12px;color:#000;transform:scaleX(0.925);transform-origin:0 0">Const(#LED, C1, #InCh, 9, 255)</div><div class="t" style="left:1320.40px;top:565.84px;width:53.62px;font-size:12px;color:#000;transform:scaleX(0.925);transform-origin:0 0">7-0</div><div class="t" style="left:1372.50px;top:565.84px;width:53.41px;font-size:12px;color:#000;transform:scaleX(0.925);transform-origin:0 0">C1-1</div><div class="t" style="left:1424.40px;top:565.84px;width:53.51px;font-size:12px;color:#000;transform:scaleX(0.925);transform-origin:0 0">1</div><div class="t" style="left:1476.40px;top:565.84px;width:53.62px;font-size:12px;color:#000;transform:scaleX(0.925);transform-origin:0 0">0</div><div class="t" style="left:1528.50px;top:565.84px;width:95.68px;font-size:12px;color:#000;transform:scaleX(0.925);transform-origin:0 0">7</div><div class="t" style="left:-5.20px;top:582.84px;width:52.40px;text-align:center;font-size:12px;color:#000;transform:scaleX(0.925)">*</div><div class="t" style="left:49.20px;top:582.84px;width:53.73px;font-size:12px;color:#000;transform:scaleX(0.925);transform-origin:0 0">MLL</div><div class="t" style="left:101.40px;top:582.84px;width:106.49px;font-size:12px;color:#000;transform:scaleX(0.925);transform-origin:0 0">D2</div><div class="t" style="left:355.50px;top:582.84px;width:233.08px;font-size:12px;color:#000;transform:scaleX(0.925);transform-origin:0 0">Status_LED weiß</div><div class="t" style="left:834.20px;top:582.84px;width:196.00px;font-size:12px;color:#000;transform:scaleX(0.925);transform-origin:0 0">LED einstellbar</div><div class="t" style="left:1018.00px;top:582.84px;width:324.22px;font-size:12px;color:#000;transform:scaleX(0.925);transform-origin:0 0">Const(#LED, C2, #InCh, 3, 90)</div><div class="t" style="left:1320.40px;top:582.84px;width:53.62px;font-size:12px;color:#000;transform:scaleX(0.925);transform-origin:0 0">7-0</div><div class="t" style="left:1372.50px;top:582.84px;width:53.41px;font-size:12px;color:#000;transform:scaleX(0.925);transform-origin:0 0">C2-2</div><div class="t" style="left:1424.40px;top:582.84px;width:53.51px;font-size:12px;color:#000;transform:scaleX(0.925);transform-origin:0 0">1</div><div class="t" style="left:1476.40px;top:582.84px;width:53.62px;font-size:12px;color:#000;transform:scaleX(0.925);transform-origin:0 0">0</div><div class="t" style="left:1528.50px;top:582.84px;width:95.68px;font-size:12px;color:#000;transform:scaleX(0.925);transform-origin:0 0">7</div><div class="t" style="left:-5.20px;top:599.84px;width:52.40px;text-align:center;font-size:12px;color:#000;transform:scaleX(0.925)">*</div><div class="t" style="left:49.20px;top:599.84px;width:53.73px;font-size:12px;color:#000;transform:scaleX(0.925);transform-origin:0 0">MLL</div><div class="t" style="left:101.40px;top:599.84px;width:106.49px;font-size:12px;color:#000;transform:scaleX(0.925);transform-origin:0 0">D3</div><div class="t" style="left:355.50px;top:599.84px;width:233.08px;font-size:12px;color:#000;transform:scaleX(0.925);transform-origin:0 0">Status_LED blau</div><div class="t" style="left:834.20px;top:599.84px;width:196.00px;font-size:12px;color:#000;transform:scaleX(0.925);transform-origin:0 0">LED einstellbar</div><div class="t" style="left:1018.00px;top:599.84px;width:324.22px;font-size:12px;color:#000;transform:scaleX(0.925);transform-origin:0 0">Const(#LED, C3, #InCh, 5, 180)</div><div class="t" style="left:1320.40px;top:599.84px;width:53.62px;font-size:12px;color:#000;transform:scaleX(0.925);transform-origin:0 0">7-0</div><div class="t" style="left:1372.50px;top:599.84px;width:53.41px;font-size:12px;color:#000;transform:scaleX(0.925);transform-origin:0 0">C3-3</div><div class="t" style="left:1424.40px;top:599.84px;width:53.51px;font-size:12px;color:#000;transform:scaleX(0.925);transform-origin:0 0">1</div><div class="t" style="left:1476.40px;top:599.84px;width:53.62px;font-size:12px;color:#000;transform:scaleX(0.925);transform-origin:0 0">0</div><div class="t" style="left:1528.50px;top:599.84px;width:95.68px;font-size:12px;color:#000;transform:scaleX(0.925);transform-origin:0 0">7</div><div class="t" style="left:49.20px;top:616.84px;width:53.73px;font-size:12px;color:#000;transform:scaleX(0.925);transform-origin:0 0">MLL</div><div class="t" style="left:355.50px;top:616.84px;width:233.08px;font-size:12px;color:#000;transform:scaleX(0.925);transform-origin:0 0">MLL-RING</div><div class="t" style="left:834.20px;top:616.84px;width:196.00px;font-size:12px;color:#000;transform:scaleX(0.925);transform-origin:0 0">MobaLedLib Farbring</div><div class="t" style="left:1018.00px;top:616.84px;width:324.22px;font-size:12px;color:#000;transform:scaleX(0.925);transform-origin:0 0">RGB_Ring(#LED, #InCh, 30, 80)</div><div class="t" style="left:1320.40px;top:616.84px;width:53.62px;font-size:12px;color:#000;transform:scaleX(0.925);transform-origin:0 0">7-1</div><div class="t" style="left:1372.50px;top:616.84px;width:53.41px;font-size:12px;color:#000;transform:scaleX(0.925);transform-origin:0 0">12</div><div class="t" style="left:1424.40px;top:616.84px;width:53.51px;font-size:12px;color:#000;transform:scaleX(0.925);transform-origin:0 0">1</div><div class="t" style="left:1476.40px;top:616.84px;width:53.62px;font-size:12px;color:#000;transform:scaleX(0.925);transform-origin:0 0">0</div><div class="t" style="left:1528.50px;top:616.84px;width:95.68px;font-size:12px;color:#000;transform:scaleX(0.925);transform-origin:0 0">7</div><div class="t" style="left:-5.20px;top:632.84px;width:52.40px;text-align:center;font-size:12px;color:#000;transform:scaleX(0.925)">*</div><div class="t" style="left:49.20px;top:632.84px;width:53.73px;font-size:12px;color:#000;transform:scaleX(0.925);transform-origin:0 0">MLL</div><div class="t" style="left:355.50px;top:632.84px;width:233.08px;font-size:12px;color:#000;transform:scaleX(0.925);transform-origin:0 0">CH7 Heartbeat</div><div class="t" style="left:834.20px;top:632.84px;width:196.00px;font-size:12px;color:#000;transform:scaleX(0.925);transform-origin:0 0">Heartbeat LED, einstellbare Farbe</div><div class="t" style="left:1018.00px;top:632.84px;width:324.22px;font-size:12px;color:#000;transform:scaleX(0.925);transform-origin:0 0">RGB_Heartbeat_Color(#LED, 5, 120, 150, 1 Sek)</div><div class="t" style="left:1320.40px;top:632.84px;width:53.62px;font-size:12px;color:#000;transform:scaleX(0.925);transform-origin:0 0">7-1</div><div class="t" style="left:1372.50px;top:632.84px;width:53.41px;font-size:12px;color:#000;transform:scaleX(0.925);transform-origin:0 0">1</div><div class="t" style="left:1424.40px;top:632.84px;width:53.51px;font-size:12px;color:#000;transform:scaleX(0.925);transform-origin:0 0">0</div><div class="t" style="left:1476.40px;top:632.84px;width:53.62px;font-size:12px;color:#000;transform:scaleX(0.925);transform-origin:0 0">0</div><div class="t" style="left:1528.50px;top:632.84px;width:95.68px;font-size:12px;color:#000;transform:scaleX(0.925);transform-origin:0 0">7</div><div class="t" style="left:-5.20px;top:649.84px;width:52.40px;text-align:center;font-size:12px;color:#000;transform:scaleX(0.925)">*</div><div class="t" style="left:49.20px;top:649.84px;width:53.73px;font-size:12px;color:#000;transform:scaleX(0.925);transform-origin:0 0">MLL</div><div class="t" style="left:355.50px;top:649.84px;width:233.08px;font-size:12px;color:#000;transform:scaleX(0.925);transform-origin:0 0">CH7 Heartbeat Rückmeldung</div><div class="t" style="left:834.20px;top:649.84px;width:196.00px;font-size:12px;color:#000;transform:scaleX(0.925);transform-origin:0 0">Heartbeat LED, einstellbare Farbe</div><div class="t" style="left:1018.00px;top:649.84px;width:324.22px;font-size:12px;color:#000;transform:scaleX(0.925);transform-origin:0 0">RGB_Heartbeat_Color(#LED, 5, 120, 205, 1 Sek)</div><div class="t" style="left:1320.40px;top:649.84px;width:53.62px;font-size:12px;color:#000;transform:scaleX(0.925);transform-origin:0 0">7-2</div><div class="t" style="left:1372.50px;top:649.84px;width:53.41px;font-size:12px;color:#000;transform:scaleX(0.925);transform-origin:0 0">1</div><div class="t" style="left:1424.40px;top:649.84px;width:53.51px;font-size:12px;color:#000;transform:scaleX(0.925);transform-origin:0 0">0</div><div class="t" style="left:1476.40px;top:649.84px;width:53.62px;font-size:12px;color:#000;transform:scaleX(0.925);transform-origin:0 0">0</div><div class="t" style="left:1528.50px;top:649.84px;width:95.68px;font-size:12px;color:#000;transform:scaleX(0.925);transform-origin:0 0">7</div><div class="t" style="left:1018.00px;top:106.54px;width:324.22px;font-size:12px;color:#000;transform:scaleX(0.925);transform-origin:0 0">#ifdef ESP32</div><div class="t" style="left:1018.00px;top:119.44px;width:324.22px;font-size:12px;color:#000;transform:scaleX(0.925);transform-origin:0 0">&nbsp;&nbsp;&nbsp;#define USE_ESP32_EXTENSIONS</div><div class="t" style="left:1018.00px;top:132.34px;width:324.22px;font-size:12px;color:#000;transform:scaleX(0.925);transform-origin:0 0">#endif</div><div class="t" style="left:-5.20px;top:14.68px;width:52.40px;text-align:center;font-size:9px;color:#f4f400;transform:scaleX(0.913)">DCC</div><div class="t" style="left:48.90px;top:14.68px;width:54.76px;font-size:9px;color:#f4f400;transform:scaleX(0.913);transform-origin:0 0">0</div><div class="t" style="left:101.10px;top:14.68px;width:108.21px;font-size:9px;color:#f4f400;transform:scaleX(0.913);transform-origin:0 0">DE</div><div class="t" style="left:202.10px;top:14.68px;width:108.32px;font-size:9px;color:#f4f400;transform:scaleX(0.913);transform-origin:0 0">COM8</div><div class="t" style="left:355.20px;top:14.68px;width:236.47px;font-size:9px;color:#f4f400;transform:scaleX(0.913);transform-origin:0 0">--board esp32:esp32:esp32:PSRAM=disabled,PartitionSc</div><div class="t" style="left:573.30px;top:14.68px;width:111.50px;font-size:9px;color:#f4f400;transform:scaleX(0.913);transform-origin:0 0">R not Chk</div><div class="t" style="left:833.90px;top:14.68px;width:198.90px;font-size:9px;color:#f4f400;transform:scaleX(0.913);transform-origin:0 0">COM?</div><div class="t" style="left:1017.70px;top:14.68px;width:323.32px;font-size:9px;color:#f4f400;transform:scaleX(0.9285);transform-origin:0 0">--board arduino:avr:nano:cpu=atmega328old --pref programmer=arduino:arduinoi</div><div class="t" style="left:1320.10px;top:14.68px;width:54.65px;font-size:9px;color:#f4f400;transform:scaleX(0.913);transform-origin:0 0">2</div><div class="t" style="left:1372.20px;top:14.68px;width:54.44px;font-size:9px;color:#f4f400;transform:scaleX(0.913);transform-origin:0 0">0</div><div class="t" style="left:1424.10px;top:14.68px;width:54.55px;font-size:9px;color:#f4f400;transform:scaleX(0.913);transform-origin:0 0">0</div><div class="t" style="left:1476.10px;top:14.68px;width:54.65px;font-size:9px;color:#f4f400;transform:scaleX(0.913);transform-origin:0 0">0</div><div class="t" style="left:1528.20px;top:14.68px;width:97.26px;font-size:9px;color:#f4f400;transform:scaleX(0.913);transform-origin:0 0">0</div><div class="t" style="left:-5.20px;top:37.84px;width:52.40px;text-align:center;font-size:12px;color:#f4f400;transform:scaleX(0.925)">Aktiv</div><div class="t" style="left:49.20px;top:37.84px;width:53.73px;font-size:12px;color:#f4f400;transform:scaleX(0.925);transform-origin:0 0">Filter</div><div class="t" style="left:101.40px;top:37.84px;width:106.49px;font-size:12px;color:#f4f400;transform:scaleX(0.925);transform-origin:0 0">Adresse oder Nam</div><div class="t" style="left:202.40px;top:37.84px;width:106.59px;font-size:12px;color:#f4f400;transform:scaleX(0.925);transform-origin:0 0">Typ</div><div class="t" style="left:303.50px;top:37.84px;width:53.51px;font-size:12px;color:#f4f400;transform:scaleX(0.925);transform-origin:0 0">Start- wer</div><div class="t" style="left:355.50px;top:37.84px;width:233.08px;font-size:12px;color:#f4f400;transform:scaleX(0.925);transform-origin:0 0">Beschreibung</div><div class="t" style="left:573.60px;top:37.84px;width:109.73px;font-size:12px;color:#f4f400;transform:scaleX(0.925);transform-origin:0 0">Verteiler- Nummer</div><div class="t" style="left:677.60px;top:37.84px;width:110.16px;font-size:12px;color:#f4f400;transform:scaleX(0.925);transform-origin:0 0">Stecker- Nummer</div><div class="t" style="left:782.00px;top:37.84px;width:53.73px;font-size:12px;color:#f4f400;transform:scaleX(0.925);transform-origin:0 0">Icon</div><div class="t" style="left:834.20px;top:37.84px;width:196.00px;font-size:12px;color:#f4f400;transform:scaleX(0.925);transform-origin:0 0">Name</div><div class="t" style="left:1018.00px;top:37.84px;width:324.22px;font-size:12px;color:#f4f400;transform:scaleX(0.925);transform-origin:0 0">Beleuchtung, Sound, oder andere Effekte</div><div class="t" style="left:1320.40px;top:37.84px;width:53.62px;font-size:12px;color:#f4f400;transform:scaleX(0.925);transform-origin:0 0">Start Led</div><div class="t" style="left:1372.50px;top:37.84px;width:53.41px;font-size:12px;color:#f4f400;transform:scaleX(0.925);transform-origin:0 0">LEDs</div><div class="t" style="left:1424.40px;top:37.84px;width:53.51px;font-size:12px;color:#f4f400;transform:scaleX(0.925);transform-origin:0 0">InCnt</div><div class="t" style="left:1476.40px;top:37.84px;width:53.62px;font-size:12px;color:#f4f400;transform:scaleX(0.925);transform-origin:0 0">Loc InCh</div><div class="t" style="left:1528.50px;top:37.84px;width:95.68px;font-size:12px;color:#f4f400;transform:scaleX(0.925);transform-origin:0 0">LED/</div>
<svg width="1600" height="672" viewBox="0 0 1600 672"><defs><clipPath id="hc"><circle cx="3.15" cy="3.35" r="3.25"/><circle cx="8.85" cy="3.35" r="3.25"/><polygon points="0.05,4.6 6,11.1 11.95,4.6 6,2.4"/></clipPath></defs><rect x="779.50" y="58.30" width="13" height="12.3" fill="#fff"/><g fill="none" stroke="#000" stroke-width="1.4"><rect x="-3.4" y="-1.9" width="6.8" height="3.8" rx="1.9" transform="translate(783.30,66.00) rotate(-45)"/><rect x="-3.4" y="-1.9" width="6.8" height="3.8" rx="1.9" transform="translate(788.70,62.00) rotate(-45)"/></g><rect x="779.30" y="168.60" width="13.2" height="15" fill="#fff"/><circle cx="785.9" cy="176.1" r="6" fill="#a020f0"/><rect x="780.90" y="174.10" width="10" height="3.6" rx="1.8" fill="#fff"/><circle cx="785.9" cy="175.90" r="1.3" fill="#a020f0"/><rect x="779.30" y="185.40" width="13.2" height="15" fill="#fff"/><circle cx="785.9" cy="192.9" r="6" fill="#a020f0"/><g stroke="#fff" stroke-width="1.2"><line x1="784.70" y1="189.30" x2="784.10" y2="196.50"/><line x1="787.70" y1="189.30" x2="787.10" y2="196.50"/><line x1="782.70" y1="191.60" x2="789.10" y2="191.60"/><line x1="782.70" y1="194.20" x2="789.10" y2="194.20"/></g><rect x="779.30" y="202.20" width="13.2" height="15" fill="#fff"/><circle cx="785.9" cy="209.7" r="6" fill="#a020f0"/><polygon points="781.60,208.00 783.70,208.00 786.70,205.40 786.70,214.00 783.70,211.40 781.60,211.40" fill="#fff"/><g stroke="#e8c8ff" stroke-width="0.9" fill="none"><path d="M788.10,207.70 Q789.30,209.70 788.10,211.70"/><path d="M789.30,206.30 Q791.20,209.70 789.30,213.10"/></g><rect x="779.50" y="220.40" width="12.6" height="12.6" fill="#fff"/><g transform="translate(779.80,221.00)" clip-path="url(#hc)"><rect x="-1" y="5.6" width="14" height="7" fill="#0000ff"/><polygon points="-1,-1 6,-1 6,1.9 1.1,6.5 -1,6.5" fill="#ff0000"/><polygon points="6,-1 13,-1 13,6.5 10.9,6.5 6,1.9" fill="#00a800"/><polygon points="5.5,2.4 1.1,6.5 5.5,6.5" fill="#a020f0"/><polygon points="6.5,2.4 10.9,6.5 6.5,6.5" fill="#00b4f0"/><rect x="5.4" y="2.2" width="1.2" height="4.3" fill="#e0a800"/></g><rect x="779.50" y="243.55" width="12.6" height="12.6" fill="#fff"/><g transform="translate(779.80,244.15)" clip-path="url(#hc)"><rect x="-1" y="5.6" width="14" height="7" fill="#0000ff"/><polygon points="-1,-1 6,-1 6,1.9 1.1,6.5 -1,6.5" fill="#ff0000"/><polygon points="6,-1 13,-1 13,6.5 10.9,6.5 6,1.9" fill="#00a800"/><polygon points="5.5,2.4 1.1,6.5 5.5,6.5" fill="#a020f0"/><polygon points="6.5,2.4 10.9,6.5 6.5,6.5" fill="#00b4f0"/><rect x="5.4" y="2.2" width="1.2" height="4.3" fill="#e0a800"/></g><rect x="779.50" y="266.00" width="12.6" height="12.6" fill="#fff"/><g transform="translate(779.80,266.60)" clip-path="url(#hc)"><rect x="-1" y="5.6" width="14" height="7" fill="#0000ff"/><polygon points="-1,-1 6,-1 6,1.9 1.1,6.5 -1,6.5" fill="#ff0000"/><polygon points="6,-1 13,-1 13,6.5 10.9,6.5 6,1.9" fill="#00a800"/><polygon points="5.5,2.4 1.1,6.5 5.5,6.5" fill="#a020f0"/><polygon points="6.5,2.4 10.9,6.5 6.5,6.5" fill="#00b4f0"/><rect x="5.4" y="2.2" width="1.2" height="4.3" fill="#e0a800"/></g><rect x="779.50" y="289.20" width="12.6" height="12.6" fill="#fff"/><g transform="translate(779.80,289.80)" clip-path="url(#hc)"><rect x="-1" y="5.6" width="14" height="7" fill="#0000ff"/><polygon points="-1,-1 6,-1 6,1.9 1.1,6.5 -1,6.5" fill="#ff0000"/><polygon points="6,-1 13,-1 13,6.5 10.9,6.5 6,1.9" fill="#00a800"/><polygon points="5.5,2.4 1.1,6.5 5.5,6.5" fill="#a020f0"/><polygon points="6.5,2.4 10.9,6.5 6.5,6.5" fill="#00b4f0"/><rect x="5.4" y="2.2" width="1.2" height="4.3" fill="#e0a800"/></g><rect x="779.50" y="312.30" width="12.6" height="12.6" fill="#fff"/><g transform="translate(779.80,312.90)" clip-path="url(#hc)"><rect x="-1" y="5.6" width="14" height="7" fill="#0000ff"/><polygon points="-1,-1 6,-1 6,1.9 1.1,6.5 -1,6.5" fill="#ff0000"/><polygon points="6,-1 13,-1 13,6.5 10.9,6.5 6,1.9" fill="#00a800"/><polygon points="5.5,2.4 1.1,6.5 5.5,6.5" fill="#a020f0"/><polygon points="6.5,2.4 10.9,6.5 6.5,6.5" fill="#00b4f0"/><rect x="5.4" y="2.2" width="1.2" height="4.3" fill="#e0a800"/></g><rect x="779.50" y="335.30" width="12.6" height="12.6" fill="#fff"/><g transform="translate(779.80,335.90)" clip-path="url(#hc)"><rect x="-1" y="5.6" width="14" height="7" fill="#0000ff"/><polygon points="-1,-1 6,-1 6,1.9 1.1,6.5 -1,6.5" fill="#ff0000"/><polygon points="6,-1 13,-1 13,6.5 10.9,6.5 6,1.9" fill="#00a800"/><polygon points="5.5,2.4 1.1,6.5 5.5,6.5" fill="#a020f0"/><polygon points="6.5,2.4 10.9,6.5 6.5,6.5" fill="#00b4f0"/><rect x="5.4" y="2.2" width="1.2" height="4.3" fill="#e0a800"/></g><rect x="779.50" y="357.90" width="12.6" height="12.6" fill="#fff"/><g transform="translate(779.80,358.50)" clip-path="url(#hc)"><rect x="-1" y="5.6" width="14" height="7" fill="#0000ff"/><polygon points="-1,-1 6,-1 6,1.9 1.1,6.5 -1,6.5" fill="#ff0000"/><polygon points="6,-1 13,-1 13,6.5 10.9,6.5 6,1.9" fill="#00a800"/><polygon points="5.5,2.4 1.1,6.5 5.5,6.5" fill="#a020f0"/><polygon points="6.5,2.4 10.9,6.5 6.5,6.5" fill="#00b4f0"/><rect x="5.4" y="2.2" width="1.2" height="4.3" fill="#e0a800"/></g><rect x="779.50" y="381.05" width="12.6" height="12.6" fill="#fff"/><g transform="translate(779.80,381.65)" clip-path="url(#hc)"><rect x="-1" y="5.6" width="14" height="7" fill="#0000ff"/><polygon points="-1,-1 6,-1 6,1.9 1.1,6.5 -1,6.5" fill="#ff0000"/><polygon points="6,-1 13,-1 13,6.5 10.9,6.5 6,1.9" fill="#00a800"/><polygon points="5.5,2.4 1.1,6.5 5.5,6.5" fill="#a020f0"/><polygon points="6.5,2.4 10.9,6.5 6.5,6.5" fill="#00b4f0"/><rect x="5.4" y="2.2" width="1.2" height="4.3" fill="#e0a800"/></g><rect x="779.50" y="403.80" width="12.6" height="12.6" fill="#fff"/><g transform="translate(779.80,404.40)" clip-path="url(#hc)"><rect x="-1" y="5.6" width="14" height="7" fill="#0000ff"/><polygon points="-1,-1 6,-1 6,1.9 1.1,6.5 -1,6.5" fill="#ff0000"/><polygon points="6,-1 13,-1 13,6.5 10.9,6.5 6,1.9" fill="#00a800"/><polygon points="5.5,2.4 1.1,6.5 5.5,6.5" fill="#a020f0"/><polygon points="6.5,2.4 10.9,6.5 6.5,6.5" fill="#00b4f0"/><rect x="5.4" y="2.2" width="1.2" height="4.3" fill="#e0a800"/></g><rect x="779.50" y="426.70" width="12.6" height="12.6" fill="#fff"/><g transform="translate(779.80,427.30)" clip-path="url(#hc)"><rect x="-1" y="5.6" width="14" height="7" fill="#0000ff"/><polygon points="-1,-1 6,-1 6,1.9 1.1,6.5 -1,6.5" fill="#ff0000"/><polygon points="6,-1 13,-1 13,6.5 10.9,6.5 6,1.9" fill="#00a800"/><polygon points="5.5,2.4 1.1,6.5 5.5,6.5" fill="#a020f0"/><polygon points="6.5,2.4 10.9,6.5 6.5,6.5" fill="#00b4f0"/><rect x="5.4" y="2.2" width="1.2" height="4.3" fill="#e0a800"/></g><rect x="779.50" y="449.55" width="12.6" height="12.6" fill="#fff"/><g transform="translate(779.80,450.15)" clip-path="url(#hc)"><rect x="-1" y="5.6" width="14" height="7" fill="#0000ff"/><polygon points="-1,-1 6,-1 6,1.9 1.1,6.5 -1,6.5" fill="#ff0000"/><polygon points="6,-1 13,-1 13,6.5 10.9,6.5 6,1.9" fill="#00a800"/><polygon points="5.5,2.4 1.1,6.5 5.5,6.5" fill="#a020f0"/><polygon points="6.5,2.4 10.9,6.5 6.5,6.5" fill="#00b4f0"/><rect x="5.4" y="2.2" width="1.2" height="4.3" fill="#e0a800"/></g><rect x="779.50" y="472.70" width="12.6" height="12.6" fill="#fff"/><g transform="translate(779.80,473.30)" clip-path="url(#hc)"><rect x="-1" y="5.6" width="14" height="7" fill="#0000ff"/><polygon points="-1,-1 6,-1 6,1.9 1.1,6.5 -1,6.5" fill="#ff0000"/><polygon points="6,-1 13,-1 13,6.5 10.9,6.5 6,1.9" fill="#00a800"/><polygon points="5.5,2.4 1.1,6.5 5.5,6.5" fill="#a020f0"/><polygon points="6.5,2.4 10.9,6.5 6.5,6.5" fill="#00b4f0"/><rect x="5.4" y="2.2" width="1.2" height="4.3" fill="#e0a800"/></g><rect x="779.50" y="495.80" width="12.6" height="12.6" fill="#fff"/><g transform="translate(779.80,496.40)" clip-path="url(#hc)"><rect x="-1" y="5.6" width="14" height="7" fill="#0000ff"/><polygon points="-1,-1 6,-1 6,1.9 1.1,6.5 -1,6.5" fill="#ff0000"/><polygon points="6,-1 13,-1 13,6.5 10.9,6.5 6,1.9" fill="#00a800"/><polygon points="5.5,2.4 1.1,6.5 5.5,6.5" fill="#a020f0"/><polygon points="6.5,2.4 10.9,6.5 6.5,6.5" fill="#00b4f0"/><rect x="5.4" y="2.2" width="1.2" height="4.3" fill="#e0a800"/></g><rect x="779.50" y="518.20" width="12.6" height="12.6" fill="#fff"/><g transform="translate(779.80,518.80)" clip-path="url(#hc)"><rect x="-1" y="5.6" width="14" height="7" fill="#0000ff"/><polygon points="-1,-1 6,-1 6,1.9 1.1,6.5 -1,6.5" fill="#ff0000"/><polygon points="6,-1 13,-1 13,6.5 10.9,6.5 6,1.9" fill="#00a800"/><polygon points="5.5,2.4 1.1,6.5 5.5,6.5" fill="#a020f0"/><polygon points="6.5,2.4 10.9,6.5 6.5,6.5" fill="#00b4f0"/><rect x="5.4" y="2.2" width="1.2" height="4.3" fill="#e0a800"/></g><rect x="779.40" y="533.10" width="12.8" height="14.4" fill="#fff"/><path d="M779.90,544.00 V540.20 A1.65,1.6 0 0 1 783.20,540.20 V544.00 Z" fill="#c8401c"/><rect x="779.90" y="542.20" width="3.3" height="1.8" fill="#222" opacity="0.75"/><path d="M784.10,544.00 V540.20 A1.65,1.6 0 0 1 787.40,540.20 V544.00 Z" fill="#30b030"/><rect x="784.10" y="542.20" width="3.3" height="1.8" fill="#222" opacity="0.75"/><path d="M788.30,544.00 V540.20 A1.65,1.6 0 0 1 791.60,540.20 V544.00 Z" fill="#1c3cd0"/><rect x="788.30" y="542.20" width="3.3" height="1.8" fill="#222" opacity="0.75"/><rect x="779.40" y="550.10" width="12.8" height="14.4" fill="#fff"/><path d="M779.90,561.00 V557.20 A1.65,1.6 0 0 1 783.20,557.20 V561.00 Z" fill="#c8401c"/><rect x="779.90" y="559.20" width="3.3" height="1.8" fill="#222" opacity="0.75"/><path d="M784.10,561.00 V557.20 A1.65,1.6 0 0 1 787.40,557.20 V561.00 Z" fill="#30b030"/><rect x="784.10" y="559.20" width="3.3" height="1.8" fill="#222" opacity="0.75"/><path d="M788.30,561.00 V557.20 A1.65,1.6 0 0 1 791.60,557.20 V561.00 Z" fill="#1c3cd0"/><rect x="788.30" y="559.20" width="3.3" height="1.8" fill="#222" opacity="0.75"/><rect x="779.40" y="567.00" width="12.8" height="14.4" fill="#fff"/><path d="M779.90,577.90 V574.10 A1.65,1.6 0 0 1 783.20,574.10 V577.90 Z" fill="#c8401c"/><rect x="779.90" y="576.10" width="3.3" height="1.8" fill="#222" opacity="0.75"/><path d="M784.10,577.90 V574.10 A1.65,1.6 0 0 1 787.40,574.10 V577.90 Z" fill="#30b030"/><rect x="784.10" y="576.10" width="3.3" height="1.8" fill="#222" opacity="0.75"/><path d="M788.30,577.90 V574.10 A1.65,1.6 0 0 1 791.60,574.10 V577.90 Z" fill="#1c3cd0"/><rect x="788.30" y="576.10" width="3.3" height="1.8" fill="#222" opacity="0.75"/><rect x="779.40" y="585.70" width="12.8" height="13.2" fill="#fff"/><circle cx="785.8" cy="592.3" r="4.6" fill="none" stroke="#000" stroke-width="3"/><circle cx="785.80" cy="587.70" r="0.85" fill="hsl(180,100%,50%)"/><circle cx="788.10" cy="588.32" r="0.85" fill="hsl(210,100%,50%)"/><circle cx="789.78" cy="590.00" r="0.85" fill="hsl(240,100%,50%)"/><circle cx="790.40" cy="592.30" r="0.85" fill="hsl(270,100%,50%)"/><circle cx="789.78" cy="594.60" r="0.85" fill="hsl(300,100%,50%)"/><circle cx="788.10" cy="596.28" r="0.85" fill="hsl(330,100%,50%)"/><circle cx="785.80" cy="596.90" r="0.85" fill="hsl(0,100%,50%)"/><circle cx="783.50" cy="596.28" r="0.85" fill="hsl(30,100%,50%)"/><circle cx="781.82" cy="594.60" r="0.85" fill="hsl(60,100%,50%)"/><circle cx="781.20" cy="592.30" r="0.85" fill="hsl(90,100%,50%)"/><circle cx="781.82" cy="590.00" r="0.85" fill="hsl(120,100%,50%)"/><circle cx="783.50" cy="588.32" r="0.85" fill="hsl(150,100%,50%)"/><rect x="779.50" y="603.00" width="12.6" height="12.6" fill="#fff"/><g transform="translate(779.80,603.60)" clip-path="url(#hc)"><rect x="-1" y="5.6" width="14" height="7" fill="#0000ff"/><polygon points="-1,-1 6,-1 6,1.9 1.1,6.5 -1,6.5" fill="#ff0000"/><polygon points="6,-1 13,-1 13,6.5 10.9,6.5 6,1.9" fill="#00a800"/><polygon points="5.5,2.4 1.1,6.5 5.5,6.5" fill="#a020f0"/><polygon points="6.5,2.4 10.9,6.5 6.5,6.5" fill="#00b4f0"/><rect x="5.4" y="2.2" width="1.2" height="4.3" fill="#e0a800"/></g><rect x="779.50" y="619.40" width="12.6" height="12.6" fill="#fff"/><g transform="translate(779.80,620.00)" clip-path="url(#hc)"><rect x="-1" y="5.6" width="14" height="7" fill="#0000ff"/><polygon points="-1,-1 6,-1 6,1.9 1.1,6.5 -1,6.5" fill="#ff0000"/><polygon points="6,-1 13,-1 13,6.5 10.9,6.5 6,1.9" fill="#00a800"/><polygon points="5.5,2.4 1.1,6.5 5.5,6.5" fill="#a020f0"/><polygon points="6.5,2.4 10.9,6.5 6.5,6.5" fill="#00b4f0"/><rect x="5.4" y="2.2" width="1.2" height="4.3" fill="#e0a800"/></g><rect x="238.9" y="187.90" width="14.2" height="14.6" fill="#ee7272" stroke="#2a2a2a" stroke-width="1"/><rect x="238.9" y="204.90" width="14.2" height="14.6" fill="#ee7272" stroke="#2a2a2a" stroke-width="1"/><rect x="1016.6" y="147.8" width="301.3" height="15.8" fill="none" stroke="#1a5fd6" stroke-width="1.4"/></svg>
<div class="t" style="left:238.40px;top:187.84px;width:15.00px;text-align:center;font-size:12px;color:#000;transform:scaleX(1.0)">0</div><div class="t" style="left:238.40px;top:204.84px;width:15.00px;text-align:center;font-size:12px;color:#000;transform:scaleX(1.0)">0</div>
</body></html>
